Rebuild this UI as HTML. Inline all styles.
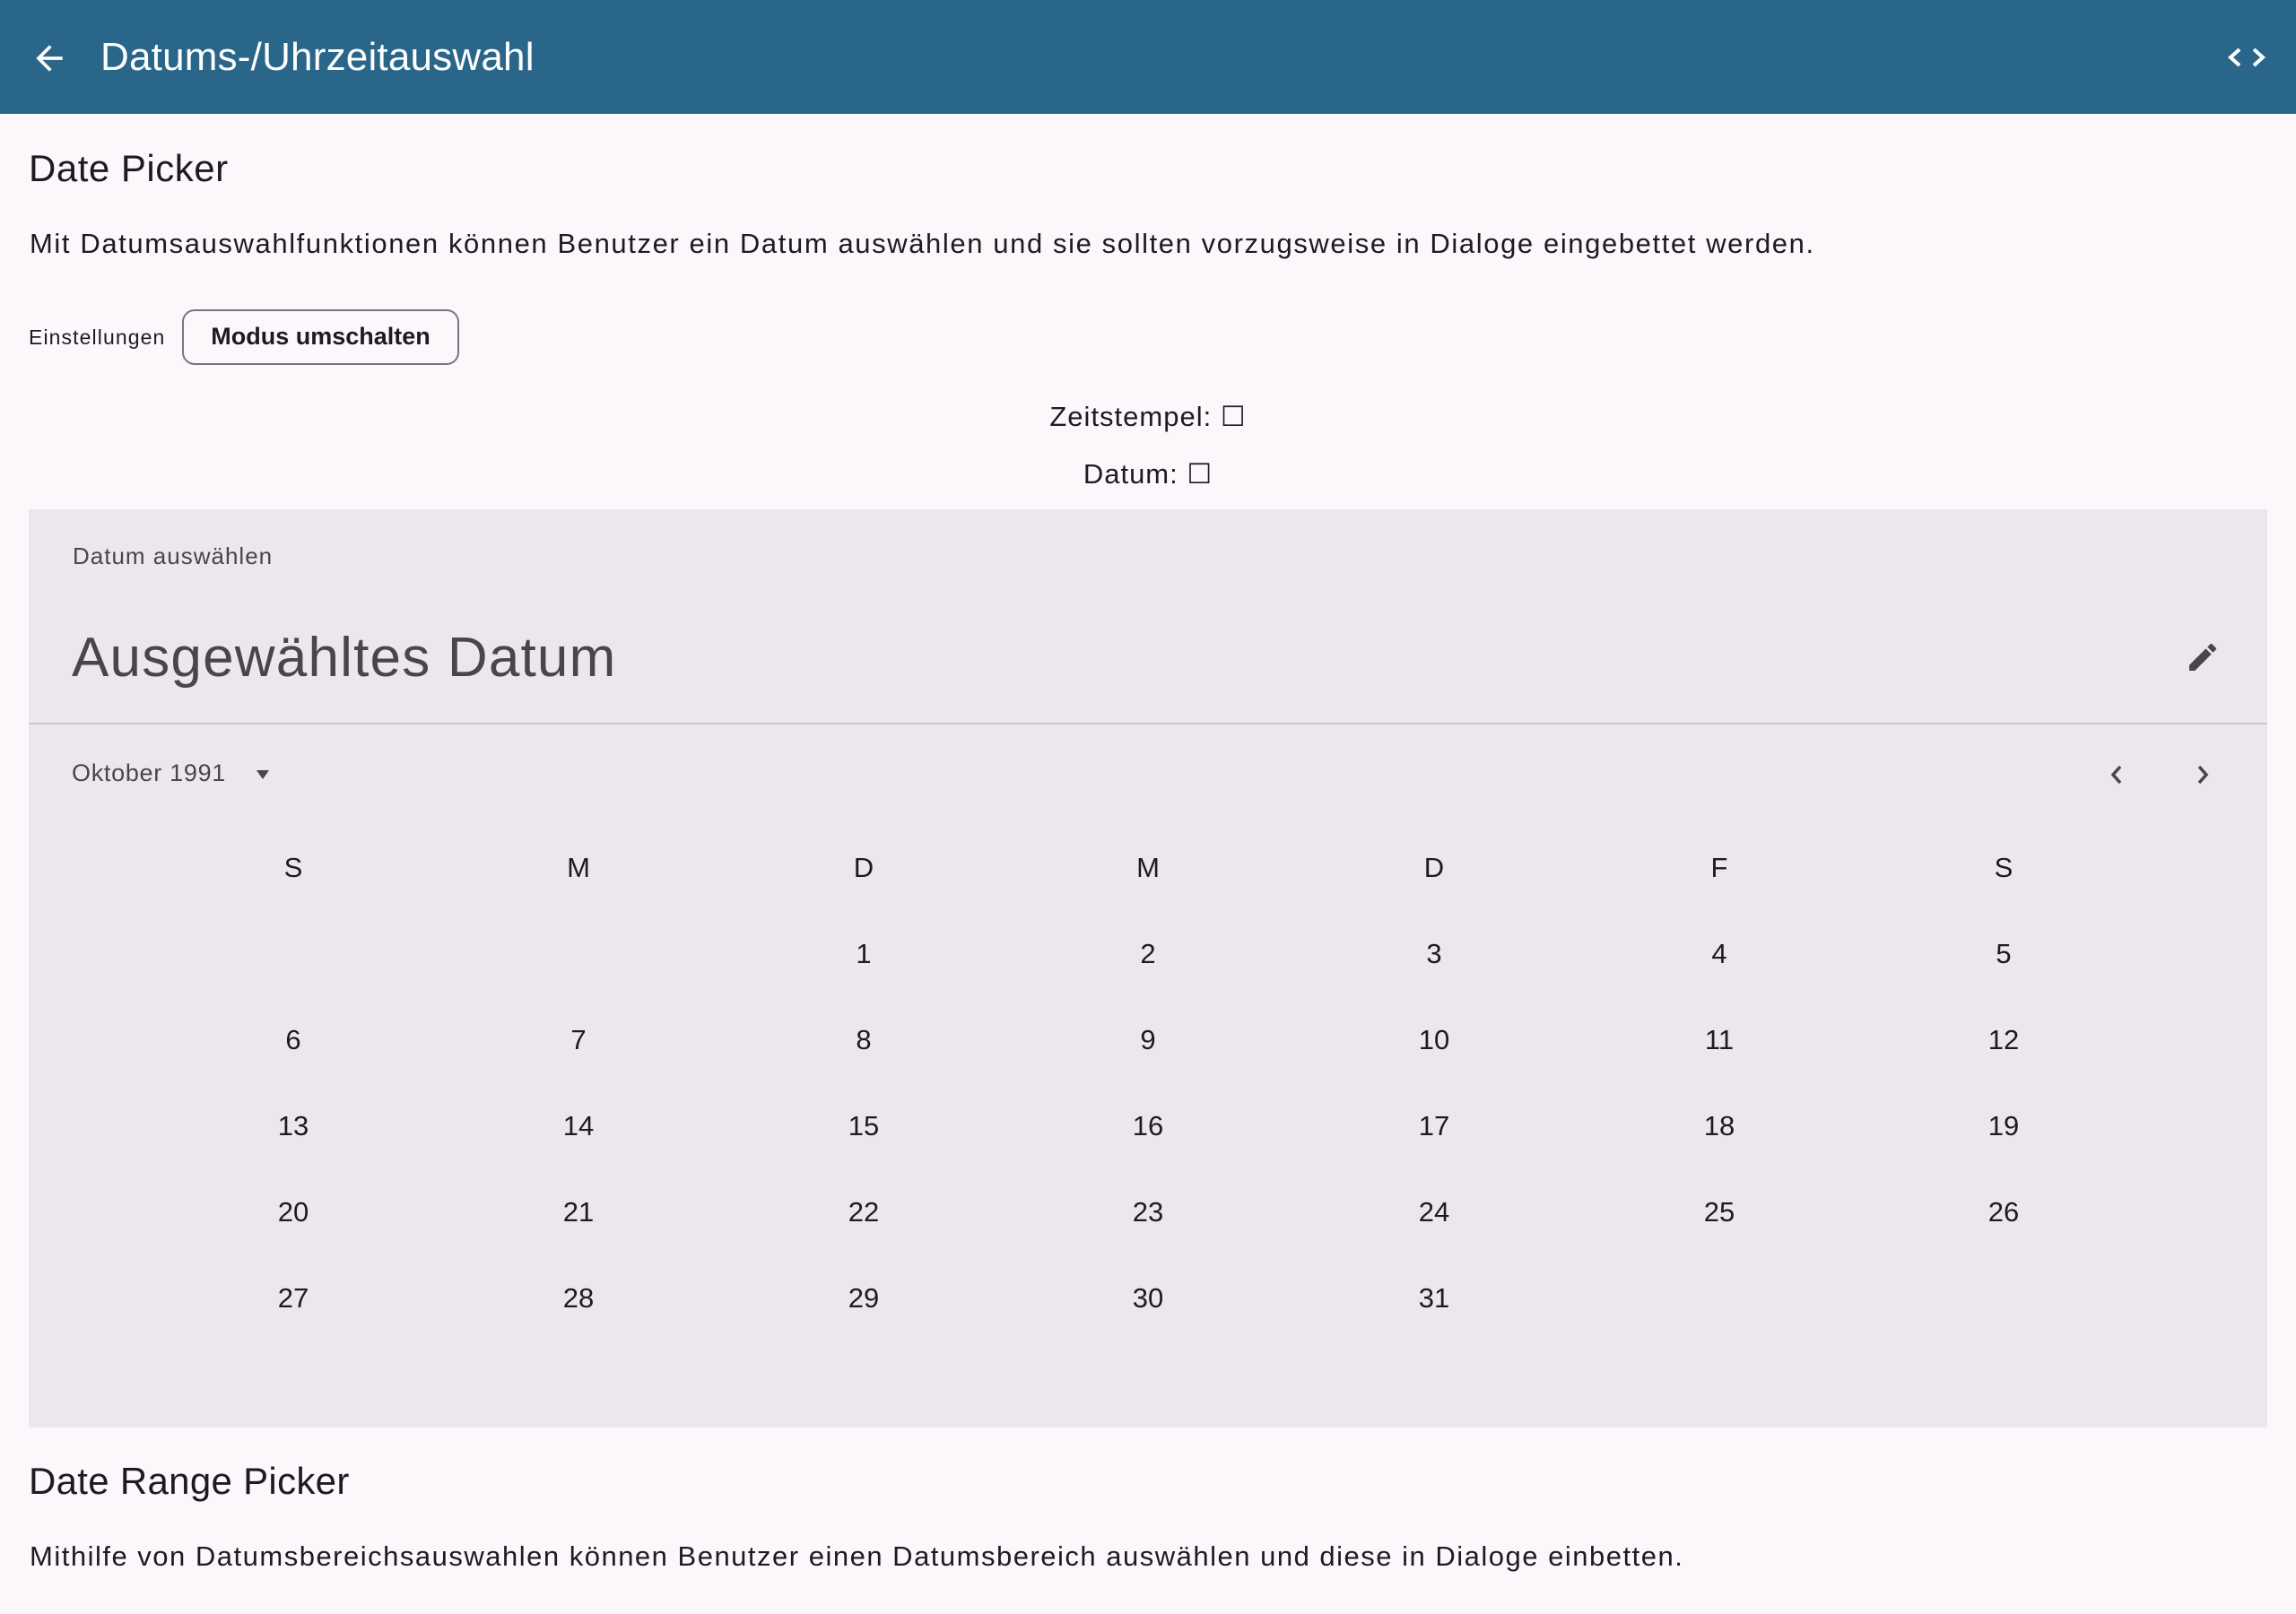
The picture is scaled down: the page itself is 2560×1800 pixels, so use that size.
<!DOCTYPE html>
<html><head><meta charset="utf-8"><style>
*{margin:0;padding:0;box-sizing:border-box}
body{width:2560px;height:1800px;background:#fdf7fc;font-family:"Liberation Sans",sans-serif;color:#1d1b20;position:relative;overflow:hidden}
.t{position:absolute;white-space:nowrap;line-height:1}
.bar{position:absolute;left:0;top:0;width:2560px;height:127px;background:#2a6689}
.card{position:absolute;left:32px;top:568px;width:2496px;height:1024px;background:#ebe7ed}
.c{position:absolute;width:200px;text-align:center;font-size:31px;line-height:1;color:#1d1b20}
</style></head><body>
<div class="bar"></div>
<svg style="position:absolute;left:33px;top:43px" width="44" height="44" viewBox="0 0 24 24"><path d="M20 11H7.83l5.59-5.59L12 4l-8 8 8 8 1.41-1.41L7.83 13H20v-2z" fill="#fff"/></svg>
<div class="t" style="left:112px;top:42px;font-size:44px;color:#fff;letter-spacing:0.2px">Datums-/Uhrzeitauswahl</div>
<svg style="position:absolute;left:2482px;top:52px" width="46" height="24" viewBox="0 0 46 24"><path d="M15 3 L5 12 L15 21 M31 3 L41 12 L31 21" stroke="#fff" stroke-width="4" fill="none"/></svg>

<div class="t" style="left:32px;top:167px;font-size:42px;letter-spacing:0.5px">Date Picker</div>
<div class="t" style="left:33px;top:256px;font-size:31px;letter-spacing:1.6px">Mit Datumsauswahlfunktionen können Benutzer ein Datum auswählen und sie sollten vorzugsweise in Dialoge eingebettet werden.</div>
<div class="t" style="left:32px;top:365px;font-size:23px;letter-spacing:1.1px">Einstellungen</div>
<div style="position:absolute;left:203px;top:345px;width:309px;height:62px;border:2px solid #79747e;border-radius:14px"></div>
<div class="t" style="left:203px;top:362px;width:309px;text-align:center;font-size:27px;font-weight:bold;letter-spacing:0">Modus umschalten</div>
<div class="t" style="left:0;top:449px;width:2560px;text-align:center;font-size:31px;letter-spacing:1px">Zeitstempel: ☐</div>
<div class="t" style="left:0;top:513px;width:2560px;text-align:center;font-size:31px;letter-spacing:1px">Datum: ☐</div>

<div class="card"></div>
<div class="t" style="left:81px;top:607px;font-size:26px;color:#49454f;letter-spacing:1px">Datum auswählen</div>
<div class="t" style="left:80px;top:703px;font-size:62px;color:#49454f;letter-spacing:1.2px">Ausgewähltes Datum</div>
<svg style="position:absolute;left:2436px;top:713px" width="40" height="40" viewBox="0 0 24 24"><path d="M3 17.25V21h3.75L17.81 9.94l-3.75-3.75L3 17.25zM20.71 7.04a1 1 0 0 0 0-1.41l-2.34-2.34a1 1 0 0 0-1.41 0l-1.83 1.83 3.75 3.75 1.83-1.83z" fill="#49454f"/></svg>
<div style="position:absolute;left:32px;top:806px;width:2496px;height:2px;background:#cac4d0"></div>
<div class="t" style="left:80px;top:849px;font-size:27px;color:#49454f;letter-spacing:0.7px">Oktober 1991</div>
<svg style="position:absolute;left:281px;top:856px" width="24" height="16"><path d="M5 3 L19 3 L12 13 Z" fill="#49454f"/></svg>
<svg style="position:absolute;left:2348px;top:850px" width="24" height="28"><path d="M16 5 L8 14 L16 23" stroke="#49454f" stroke-width="3.5" fill="none"/></svg>
<svg style="position:absolute;left:2444px;top:850px" width="24" height="28"><path d="M8 5 L16 14 L8 23" stroke="#49454f" stroke-width="3.5" fill="none"/></svg>

<div class="c" style="left:227px;top:952px">S</div>
<div class="c" style="left:545px;top:952px">M</div>
<div class="c" style="left:863px;top:952px">D</div>
<div class="c" style="left:1180px;top:952px">M</div>
<div class="c" style="left:1499px;top:952px">D</div>
<div class="c" style="left:1817px;top:952px">F</div>
<div class="c" style="left:2134px;top:952px">S</div>

<div class="c" style="left:863px;top:1048px">1</div>
<div class="c" style="left:1180px;top:1048px">2</div>
<div class="c" style="left:1499px;top:1048px">3</div>
<div class="c" style="left:1817px;top:1048px">4</div>
<div class="c" style="left:2134px;top:1048px">5</div>

<div class="c" style="left:227px;top:1144px">6</div>
<div class="c" style="left:545px;top:1144px">7</div>
<div class="c" style="left:863px;top:1144px">8</div>
<div class="c" style="left:1180px;top:1144px">9</div>
<div class="c" style="left:1499px;top:1144px">10</div>
<div class="c" style="left:1817px;top:1144px">11</div>
<div class="c" style="left:2134px;top:1144px">12</div>

<div class="c" style="left:227px;top:1240px">13</div>
<div class="c" style="left:545px;top:1240px">14</div>
<div class="c" style="left:863px;top:1240px">15</div>
<div class="c" style="left:1180px;top:1240px">16</div>
<div class="c" style="left:1499px;top:1240px">17</div>
<div class="c" style="left:1817px;top:1240px">18</div>
<div class="c" style="left:2134px;top:1240px">19</div>

<div class="c" style="left:227px;top:1336px">20</div>
<div class="c" style="left:545px;top:1336px">21</div>
<div class="c" style="left:863px;top:1336px">22</div>
<div class="c" style="left:1180px;top:1336px">23</div>
<div class="c" style="left:1499px;top:1336px">24</div>
<div class="c" style="left:1817px;top:1336px">25</div>
<div class="c" style="left:2134px;top:1336px">26</div>

<div class="c" style="left:227px;top:1432px">27</div>
<div class="c" style="left:545px;top:1432px">28</div>
<div class="c" style="left:863px;top:1432px">29</div>
<div class="c" style="left:1180px;top:1432px">30</div>
<div class="c" style="left:1499px;top:1432px">31</div>

<div class="t" style="left:32px;top:1631px;font-size:42px;letter-spacing:0.3px">Date Range Picker</div>
<div class="t" style="left:33px;top:1720px;font-size:31px;letter-spacing:1.5px">Mithilfe von Datumsbereichsauswahlen können Benutzer einen Datumsbereich auswählen und diese in Dialoge einbetten.</div>
</body></html>
